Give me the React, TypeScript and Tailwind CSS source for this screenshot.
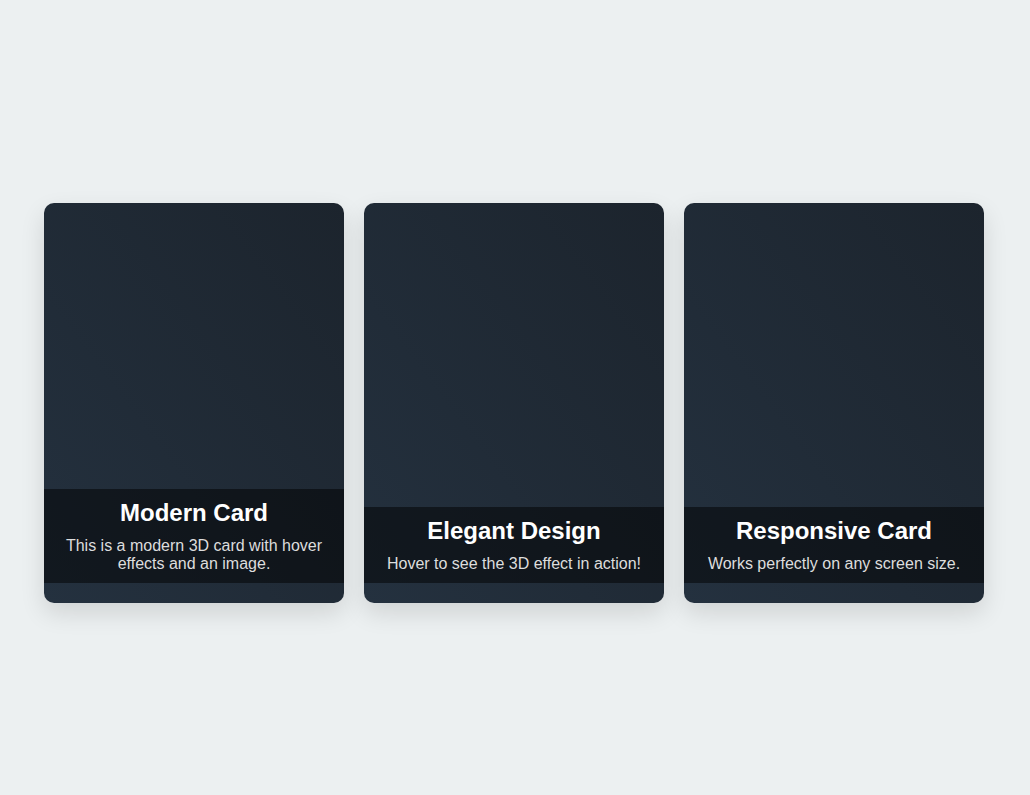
import React from 'react';

const cards = [
  { title: 'Modern Card', text: 'This is a modern 3D card with hover effects and an image.' },
  { title: 'Elegant Design', text: 'Hover to see the 3D effect in action!' },
  { title: 'Responsive Card', text: 'Works perfectly on any screen size.' }
];

function Card({ title, text }: { title: string; text: string }) {
  return (
    <div className="w-[300px] h-[400px] rounded-[10px] overflow-hidden flex flex-col justify-end pb-5 bg-gradient-to-tr from-[#24313f] to-[#1c242d] shadow-[0_10px_25px_rgba(0,0,0,0.12)]">
      <div className="bg-black/50 p-[10px] text-center">
        <h2 className="text-[24px] leading-[28px] font-bold text-white mb-[10px]">{title}</h2>
        <p className="text-[16px] leading-[18px] text-[#dddddd]">{text}</p>
      </div>
    </div>
  );
}

export default function App() {
  return (
    <div
      className="min-h-screen w-full bg-[#ecf0f1] pt-[203px] pl-[44px]"
      style={{ fontFamily: '"Liberation Sans", Arial, sans-serif' }}
    >
      <div className="flex gap-5">
        {cards.map((c) => (
          <Card key={c.title} title={c.title} text={c.text} />
        ))}
      </div>
    </div>
  );
}
